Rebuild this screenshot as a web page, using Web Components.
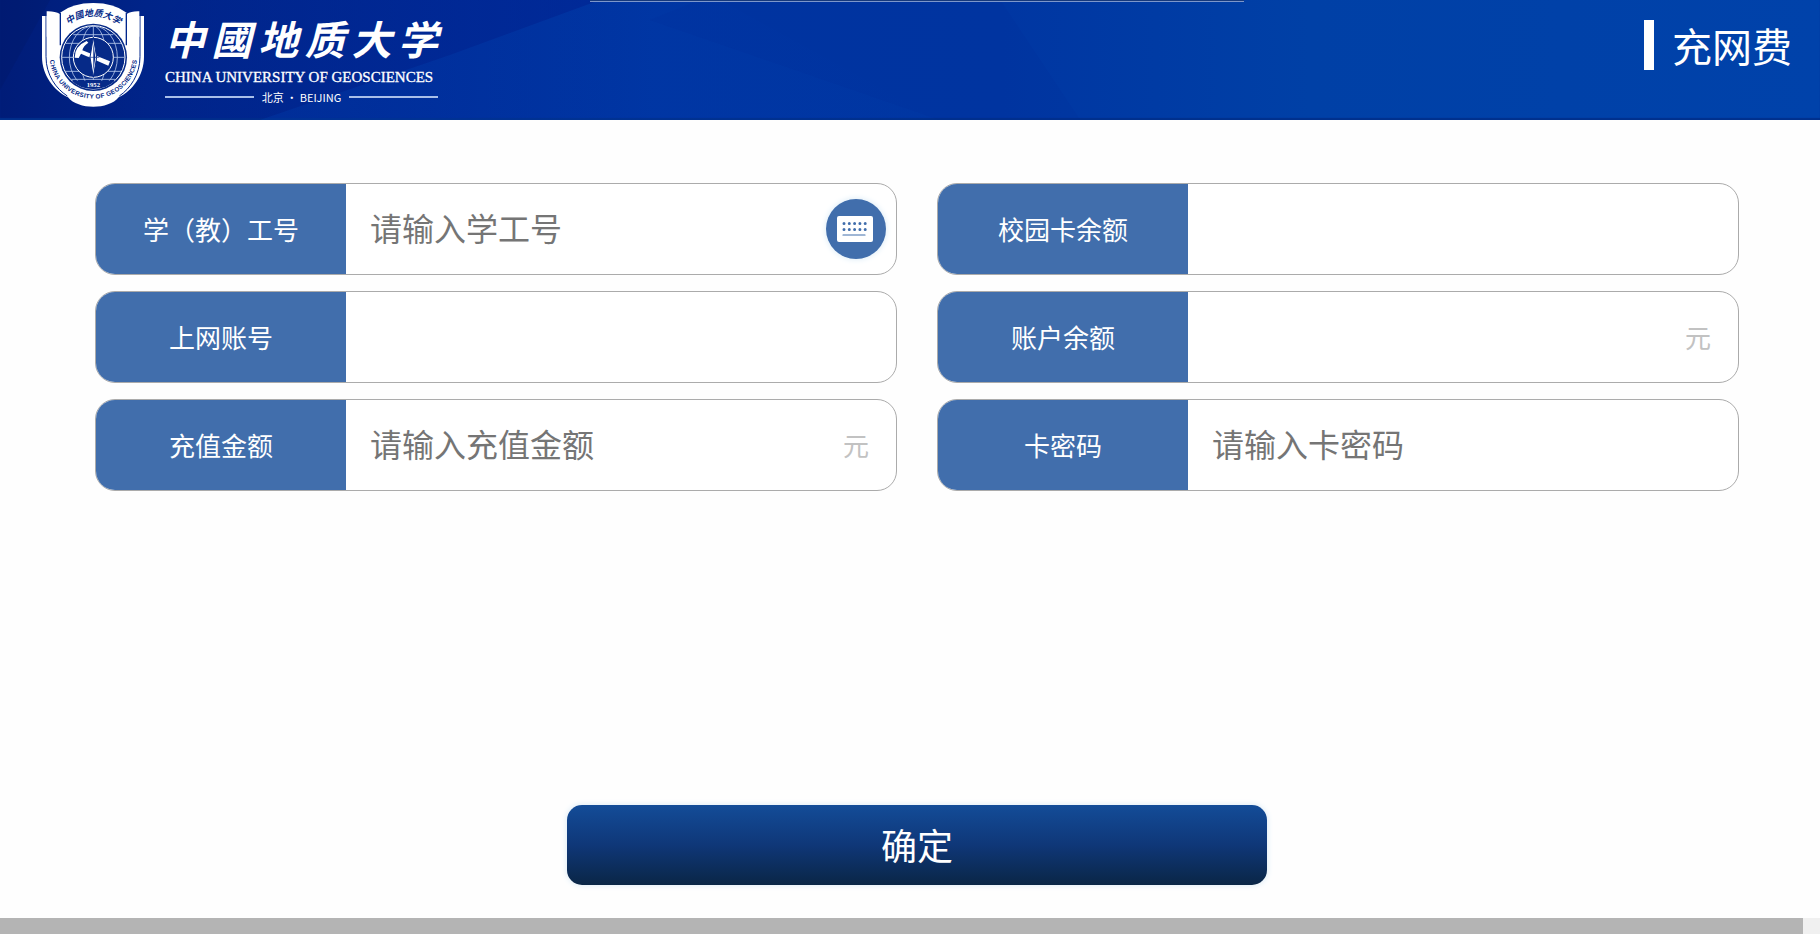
<!DOCTYPE html>
<html lang="zh-CN">
<head>
    <meta charset="utf-8">
    <meta name="viewport" content="width=device-width, initial-scale=1">
    <title>充网费</title>
    <style>
        :root {
            --primary: #416eac;
            --line: #ababab;
            --muted: #c2c2c2;
        }
        body {
            margin: 0;
            min-height: 100vh;
            display: flex;
            flex-direction: column;
            background: #fefefe;
            font-family: "Noto Sans CJK SC", "Noto Sans", sans-serif;
        }
    </style>
</head>
<body>
    <page-header>
        <school-logo slot="logo"></school-logo>
        充网费
    </page-header>
    <pay-form>
        <form-field label="学（教）工号" placeholder="请输入学工号"><keyboard-button></keyboard-button></form-field>
        <form-field label="校园卡余额" readonly></form-field>
        <form-field label="上网账号" readonly></form-field>
        <form-field label="账户余额" readonly><field-unit>元</field-unit></form-field>
        <form-field label="充值金额" placeholder="请输入充值金额"><field-unit>元</field-unit></form-field>
        <form-field label="卡密码" type="password" placeholder="请输入卡密码"></form-field>
        <submit-button slot="action">确定</submit-button>
    </pay-form>
    <bottom-bar></bottom-bar>

    <script>
        class PageHeader extends HTMLElement {
            constructor() {
                super();

                const shadow = this.attachShadow({mode: 'open'});
                shadow.innerHTML = `
                    <style>
                        :host {
                            display: block;
                        }
                        header {
                            position: relative;
                            display: flex;
                            justify-content: space-between;
                            align-items: flex-start;
                            height: 120px;
                            padding: 0 28px 0 30px;
                            box-sizing: border-box;
                            overflow: hidden;
                            color: white;
                            background: linear-gradient(90deg, #001c78, #002489 8%, #002c98 24%, #0035a2 36%, #0036a2 55%, #0040a6 72%, #0042aa);
                            box-shadow: inset 0 -2px 1px #00308c;
                        }
                        .rays {
                            position: absolute;
                            inset: 0;
                            width: 100%;
                            height: 100%;
                        }
                        .notch {
                            position: absolute;
                            top: 0;
                            left: 590px;
                            right: 576px;
                            height: 1px;
                            background: #16397c;
                            border-bottom: 1px solid #7d97cb;
                        }
                        h1 {
                            position: relative;
                            display: flex;
                            gap: 18px;
                            margin: 20px 0 0;
                            font-size: 40px;
                            font-weight: 400;
                            line-height: 50px;
                        }
                        h1::before {
                            content: "";
                            width: 10px;
                            height: 50px;
                            background: white;
                        }
                        slot[name] {
                            position: relative;
                        }
                    </style>
                    <header>
                        <svg class="rays" viewBox="0 0 1820 120" preserveAspectRatio="none" aria-hidden="true">
                            <defs>
                                <linearGradient id="dark" x1="0" x2="1" y1="0" y2="0">
                                    <stop offset="0" stop-color="#002088" stop-opacity="0"/>
                                    <stop offset="1" stop-color="#002090" stop-opacity=".5"/>
                                </linearGradient>
                                <linearGradient id="light" x1="0" x2="1" y1="0" y2="0">
                                    <stop offset="0" stop-color="#003cae" stop-opacity=".3"/>
                                    <stop offset="1" stop-color="#003cae" stop-opacity="0"/>
                                </linearGradient>
                            </defs>
                            <path d="M180 0H600L450 55L260 120H60Z" fill="url(#dark)"/>
                            <path d="M600 0L450 55L260 120H940L720 0Z" fill="url(#light)"/>
                            <path d="M0 0H50L0 90Z" fill="#00124f" opacity=".15"/>
                            <path d="M650 20L940 120H1080L1000 0H700Z" fill="#002c90" opacity=".12"/>
                        </svg>
                        <div class="notch"></div>
                        <slot name="logo"></slot>
                        <h1><slot></slot></h1>
                    </header>
                `;
            }
        }

        class SchoolLogo extends HTMLElement {
            constructor() {
                super();

                const shadow = this.attachShadow({mode: 'open'});
                shadow.innerHTML = `
                    <style>
                        :host {
                            position: relative;
                            display: flex;
                            gap: 5px;
                            color: white;
                        }
                        svg {
                            width: 130px;
                            height: 115px;
                        }
                        .name {
                            width: 273px;
                            padding-top: 10px;
                        }
                        .zh {
                            display: flex;
                            justify-content: space-between;
                            font-size: 40px;
                            font-style: italic;
                            font-weight: 700;
                            line-height: 56px;
                        }
                        .en {
                            font: 15px/22px "Liberation Serif", serif;
                            -webkit-text-stroke: 0.3px white;
                        }
                        .campus {
                            display: flex;
                            align-items: center;
                            gap: 8px;
                            font-size: 11px;
                            line-height: 18px;
                        }
                        .campus::before,
                        .campus::after {
                            content: "";
                            flex: 1;
                            height: 2px;
                            background: #a9bfe9;
                        }
                    </style>
                    <svg viewBox="0 0 390 345" role="img" aria-label="校徽">
                        <defs>
                            <path id="top" d="M106 82A122 122 0 0 1 274 82"/>
                            <path id="bottom" d="M67 164A123 123 0 0 0 313 164"/>
                            <clipPath id="globe"><circle cx="190" cy="172" r="94"/></clipPath>
                        </defs>
                        <!-- book pages and shield -->
                        <path d="M36 48H342V170C342 225 308 272 266 292C236 330 144 330 114 292C72 272 36 225 36 170Z" fill="#fff"/>
                        <path d="M48 44V170C48 225 78 266 112 288M330 44V170C330 225 300 266 268 288" fill="none" stroke="#00268c" stroke-width="3"/>
                        <path d="M50 34Q74 33 90 42V110H50ZM328 34Q304 33 290 42V110H328Z" fill="#fff"/>
                        <path d="M90 120V38Q128 9 190 9Q252 9 290 38V120Z" fill="#fff"/>
                        <path d="M91 38V136M289 38V136" stroke="#00268c" stroke-width="4"/>
                        <!-- globe -->
                        <circle cx="190" cy="172" r="101" fill="#062a88"/>
                        <circle cx="190" cy="172" r="95" fill="none" stroke="#fff" stroke-width="3"/>
                        <g clip-path="url(#globe)" fill="none" stroke="#b6c8ec" stroke-width="2.5">
                            <path d="M90 130H290M90 172H290M90 214H290M130 104H250M125 238H255M190 76V240"/>
                            <ellipse cx="190" cy="172" rx="72" ry="94"/>
                            <ellipse cx="190" cy="172" rx="38" ry="94"/>
                        </g>
                        <path d="M125 242H255Q230 267 190 267Q150 267 125 242Z" fill="#062a88"/>
                        <circle cx="190" cy="172" r="60" fill="#062a88" stroke="#fff" stroke-width="3"/>
                        <!-- hammer and compass -->
                        <path d="M134 173Q134 138 170 123L175 128Q160 138 157 151L240 184L235 197L153 161L146 174Z" fill="#fff"/>
                        <path d="M190 112L200 172L190 232L180 172Z" fill="#fff" stroke="#062a88" stroke-width="3"/>
                        <path d="M190 130L196 172L190 214Z" fill="#062a88"/>
                        <path d="M172 172H208" stroke="#062a88" stroke-width="2"/>
                        <text x="190" y="262" text-anchor="middle" font-family="Liberation Serif, serif" font-size="20" font-weight="700" fill="#fff">1952</text>
                        <g fill="#062a88" font-weight="700">
                            <text font-size="27" font-style="italic" text-anchor="middle"><textPath href="#top" startOffset="50%">中國地质大学</textPath></text>
                            <text font-family="Liberation Sans, sans-serif" font-size="19" text-anchor="middle" dominant-baseline="central"><textPath href="#bottom" startOffset="50%">CHINA UNIVERSITY OF GEOSCIENCES</textPath></text>
                        </g>
                    </svg>
                    <div class="name">
                        <div class="zh"><span>中</span><span>國</span><span>地</span><span>质</span><span>大</span><span>学</span></div>
                        <div class="en">CHINA UNIVERSITY OF GEOSCIENCES</div>
                        <div class="campus">北京 · BEIJING</div>
                    </div>
                `;
            }
        }

        class PayForm extends HTMLElement {
            constructor() {
                super();

                const shadow = this.attachShadow({mode: 'open'});
                shadow.innerHTML = `
                    <style>
                        :host {
                            flex: 1;
                            display: flex;
                        }
                        form {
                            flex: 1;
                            display: flex;
                            flex-direction: column;
                            justify-content: space-between;
                            gap: 40px;
                            padding: 63px 81px 33px 95px;
                        }
                        .fields {
                            display: grid;
                            grid-template-columns: 1fr 1fr;
                            gap: 16px 40px;
                        }
                    </style>
                    <form>
                        <div class="fields"><slot></slot></div>
                        <slot name="action"></slot>
                    </form>
                `;
            }
        }

        class FormField extends HTMLElement {
            constructor() {
                super();

                const shadow = this.attachShadow({mode: 'open'});
                shadow.innerHTML = `
                    <style>
                        :host {
                            display: flex;
                            align-items: center;
                            height: 92px;
                            box-sizing: border-box;
                            border: 1px solid var(--line);
                            border-radius: 20px;
                            overflow: hidden;
                            background: white;
                        }
                        label {
                            flex: none;
                            width: 250px;
                            background: var(--primary);
                            color: white;
                            font-size: 26px;
                            line-height: 92px;
                            text-align: center;
                        }
                        input {
                            flex: 1;
                            min-width: 0;
                            height: 100%;
                            padding: 0 24px 4px;
                            box-sizing: border-box;
                            border: none;
                            outline: none;
                            background: none;
                            font-family: inherit;
                            font-size: 32px;
                        }
                        input::placeholder {
                            color: #757575;
                        }
                    </style>
                    <label for="input"></label>
                    <input id="input">
                    <slot></slot>
                `;

                const input = shadow.querySelector('input');

                shadow.querySelector('label').textContent = this.getAttribute('label');
                input.type = this.getAttribute('type') || 'text';
                input.placeholder = this.getAttribute('placeholder') || '';
                input.readOnly = this.hasAttribute('readonly');
            }
        }

        class FieldUnit extends HTMLElement {
            constructor() {
                super();

                const shadow = this.attachShadow({mode: 'open'});
                shadow.innerHTML = `
                    <style>
                        :host {
                            display: block;
                            padding-right: 27px;
                            color: var(--muted);
                            font-size: 26px;
                            line-height: 40px;
                        }
                    </style>
                    <slot></slot>
                `;
            }
        }

        class KeyboardButton extends HTMLElement {
            constructor() {
                super();

                const shadow = this.attachShadow({mode: 'open'});
                shadow.innerHTML = `
                    <style>
                        :host {
                            display: block;
                            padding-right: 10px;
                        }
                        button {
                            display: block;
                            width: 60px;
                            height: 60px;
                            padding: 0;
                            border: none;
                            border-radius: 50%;
                            background: var(--primary);
                            box-shadow: 0 0 6px #d5e8f5;
                        }
                        svg {
                            display: block;
                        }
                    </style>
                    <button type="button" aria-label="键盘">
                        <svg viewBox="0 0 60 60" aria-hidden="true">
                            <rect x="11" y="17" width="36" height="26" rx="2" fill="#fff"/>
                            <g fill="none" stroke="#416eac" stroke-linecap="round">
                                <path d="M18 24.5H40M18 30.5H40" stroke-width="3" stroke-dasharray="0 5.3"/>
                                <path d="M17 36H39" stroke-width="1.2"/>
                            </g>
                        </svg>
                    </button>
                `;
            }
        }

        class SubmitButton extends HTMLElement {
            constructor() {
                super();

                const shadow = this.attachShadow({mode: 'open'});
                shadow.innerHTML = `
                    <style>
                        :host {
                            display: flex;
                            justify-content: center;
                        }
                        button {
                            width: 700px;
                            max-width: 100%;
                            height: 80px;
                            padding: 0 0 2px;
                            border: none;
                            border-radius: 15px;
                            background: linear-gradient(#134c98, #0f3778 50%, #0a2646);
                            box-shadow: 0 0 6px #d5e8f5;
                            color: white;
                            font-family: inherit;
                            font-size: 36px;
                        }
                    </style>
                    <button type="button"><slot></slot></button>
                `;
            }
        }

        class BottomBar extends HTMLElement {
            constructor() {
                super();

                const shadow = this.attachShadow({mode: 'open'});
                shadow.innerHTML = `
                    <style>
                        :host {
                            display: block;
                            height: 16px;
                            padding-right: 17px;
                            background: #f0f0f0;
                        }
                        div {
                            height: 100%;
                            background: #b4b4b4;
                        }
                    </style>
                    <div></div>
                `;
            }
        }

        customElements.define('page-header', PageHeader);
        customElements.define('school-logo', SchoolLogo);
        customElements.define('pay-form', PayForm);
        customElements.define('form-field', FormField);
        customElements.define('field-unit', FieldUnit);
        customElements.define('keyboard-button', KeyboardButton);
        customElements.define('submit-button', SubmitButton);
        customElements.define('bottom-bar', BottomBar);
    </script>
</body>
</html>
